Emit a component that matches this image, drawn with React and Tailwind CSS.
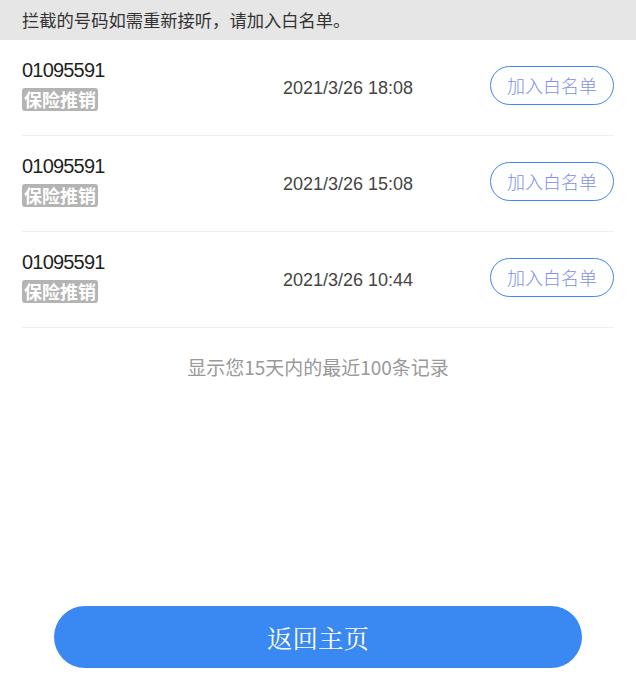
const records = [
  { number: "01095591", tag: "保险推销", time: "2021/3/26 18:08" },
  { number: "01095591", tag: "保险推销", time: "2021/3/26 15:08" },
  { number: "01095591", tag: "保险推销", time: "2021/3/26 10:44" },
];

const cjk = { fontFamily: '"Noto Sans CJK SC", "Noto Sans", sans-serif' };

function RecordRow({ number, tag, time }) {
  return (
    <div className="flex h-[96px] items-center border-b border-[#efefef] pb-[4px]">
      <div className="flex w-[261px] flex-col items-start pb-[2px]">
        <span
          className="text-[20px] leading-[24px] tracking-[-0.8px] text-[#1f1f1f]"
          style={{ fontFamily: '"Liberation Sans", sans-serif' }}
        >
          {number}
        </span>
        <span
          className="mt-[6px] flex h-[23px] items-center rounded-[3px] bg-[#b4b4b4] px-[2px] text-[18px] font-bold text-white"
          style={cjk}
        >
          {tag}
        </span>
      </div>
      <div
        className="flex-1 pt-[6px] text-[18px] text-[#444]"
        style={{ fontFamily: '"Liberation Sans", sans-serif' }}
      >
        {time}
      </div>
      <button
        className="h-[39px] w-[124px] rounded-full border border-[#3d86f0] text-[18px] font-light text-[#8190e6]"
        style={cjk}
      >
        加入白名单
      </button>
    </div>
  );
}

export default function App() {
  return (
    <div className="flex min-h-screen flex-col bg-white" style={cjk}>
      <div className="flex h-[40px] items-center bg-[#e6e6e6] px-[22px] text-[17.3px] text-[#333]">
        拦截的号码如需重新接听，请加入白名单。
      </div>

      <div className="px-[22px]">
        {records.map((r, i) => (
          <RecordRow key={i} {...r} />
        ))}
      </div>

      <p className="mt-[25px] text-center text-[19px] text-[#999]">
        显示您15天内的最近100条记录
      </p>

      <div className="mt-auto flex justify-center pb-[30px]">
        <button
          className="h-[62px] w-[528px] rounded-full bg-[#3a88f2] text-[25.5px] text-white"
          style={{ fontFamily: '"Noto Serif CJK SC", serif' }}
        >
          返回主页
        </button>
      </div>
    </div>
  );
}
